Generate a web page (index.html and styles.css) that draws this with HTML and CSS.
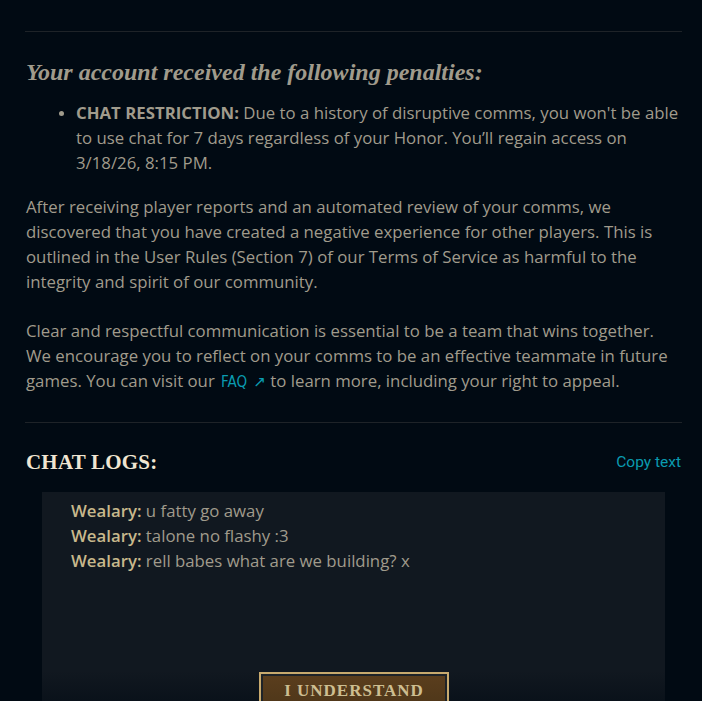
FILE: index.html
```html
<!DOCTYPE html>
<html lang="en">
<head>
<meta charset="utf-8">
<title>Penalty notice</title>
<link rel="stylesheet" href="styles.css">
</head>
<body>
<div class="page">
  <h1 class="title">Penalty Warning</h1>
  <hr class="divider">
  <h2 class="penalty-head">Your account received the following penalties:</h2>
  <ul class="penalties">
    <li><strong>CHAT RESTRICTION:</strong> Due to a history of disruptive comms, you won't be able to use chat for 7 days regardless of your Honor. You’ll regain access on 3/18/26, 8:15 PM.</li>
  </ul>
  <p class="body-text">After receiving player reports and an automated review of your comms, we discovered that you have created a negative experience for other players. This is outlined in the User Rules (Section 7) of our Terms of Service as harmful to the integrity and spirit of our community.</p>
  <p class="body-text">Clear and respectful communication is essential to be a team that wins together. We encourage you to reflect on your comms to be an effective teammate in future games. You can visit our <a class="faq" href="#">FAQ <span class="arrow">↗</span></a> to learn more, including your right to appeal.</p>
  <hr class="divider divider-2">
  <div class="logs-head">
    <h3 class="logs-title">CHAT LOGS:</h3>
    <a class="copy" href="#">Copy text</a>
  </div>
  <div class="logs">
    <div class="line"><span class="who">Wealary:</span> u fatty go away</div>
    <div class="line"><span class="who">Wealary:</span> talone no flashy :3</div>
    <div class="line"><span class="who">Wealary:</span> rell babes what are we building? x</div>
  </div>
</div>
<div class="footer">
  <button class="understand">I UNDERSTAND</button>
</div>
</body>
</html>
```
FILE: styles.css
```css
html, body {
  margin: 0;
  padding: 0;
  background: #010a13;
  height: 100%;
  overflow: hidden;
}
body {
  font-family: "Open Sans", "Liberation Sans", sans-serif;
  color: #a09b8c;
  font-size: 16.8px;
  line-height: 25px;
}
.page {
  display: flow-root;
  padding: 0 20px 0 26px;
}
.title {
  margin: -39px 0 0 0;
  height: 70px;
  font-family: "Liberation Serif", serif;
  font-size: 34px;
  line-height: 40px;
  color: #f0e6d2;
  text-align: center;
  width: 656px;
}
.divider {
  border: 0;
  border-top: 1px solid #1e2328;
  margin: 0 0 0 -1px;
  width: 657px;
  height: 0;
}
.penalty-head {
  margin: 27px 0 0 0;
  font-family: "Liberation Serif", serif;
  font-style: italic;
  font-weight: bold;
  font-size: 24px;
  line-height: 26px;
  color: #a09b8c;
}
.penalties {
  margin: 15px 0 0 0;
  padding-left: 50px;
}
.penalties li::marker {
  font-size: 14px;
}
.penalties strong {
  font-weight: bold;
}
.body-text {
  margin: 19px 0 0 0;
  width: 656px;
}
.body-text + .body-text {
  margin-top: 24px;
}
.faq {
  color: #0a9bb0;
  text-decoration: none;
  font-size: 15px;
  font-family: "DejaVu Sans Condensed", "Liberation Sans", sans-serif;
  margin-left: 2px;
}
.arrow {
  font-family: "DejaVu Sans", sans-serif;
  margin-left: 2px;
}
.divider-2 {
  margin-top: 27px;
}
.logs-head {
  display: flex;
  justify-content: space-between;
  align-items: center;
  width: 656px;
  margin-top: 26px;
}
.logs-title {
  margin: 0;
  font-family: "Liberation Serif", serif;
  font-weight: bold;
  font-size: 21px;
  line-height: 26px;
  color: #f0e6d2;
  letter-spacing: 0.2px;
}
.copy {
  color: #0a9bb0;
  text-decoration: none;
  font-size: 15.5px;
  font-family: "Roboto", "Liberation Sans", sans-serif;
  margin-right: 1px;
}
.logs {
  margin: 17px 0 0 16px;
  width: 623px;
  height: 400px;
  background: #111820;
  padding: 6px 0 0 29px;
  box-sizing: border-box;
}
.who {
  color: #c8b98c;
  font-weight: 600;
}
.footer {
  position: absolute;
  left: 0;
  right: 0;
  bottom: 0;
  height: 30px;
  background: linear-gradient(to bottom, rgba(1, 10, 19, 0), rgba(1, 10, 19, 0.45));
  display: flex;
  justify-content: center;
}
.understand {
  margin: 1px 0 0 6px;
  width: 190px;
  border: 2px solid #c8aa6e;
  box-shadow: inset 0 0 0 2px #1e2328;
  background: linear-gradient(to bottom, #5b3e1d, #4a3418);
  color: #cdbe91;
  font-family: "Liberation Serif", serif;
  font-weight: bold;
  font-size: 17px;
  letter-spacing: 1px;
  padding: 7px 0 15px 0;
  align-self: flex-start;
  line-height: 20px;
}
```
